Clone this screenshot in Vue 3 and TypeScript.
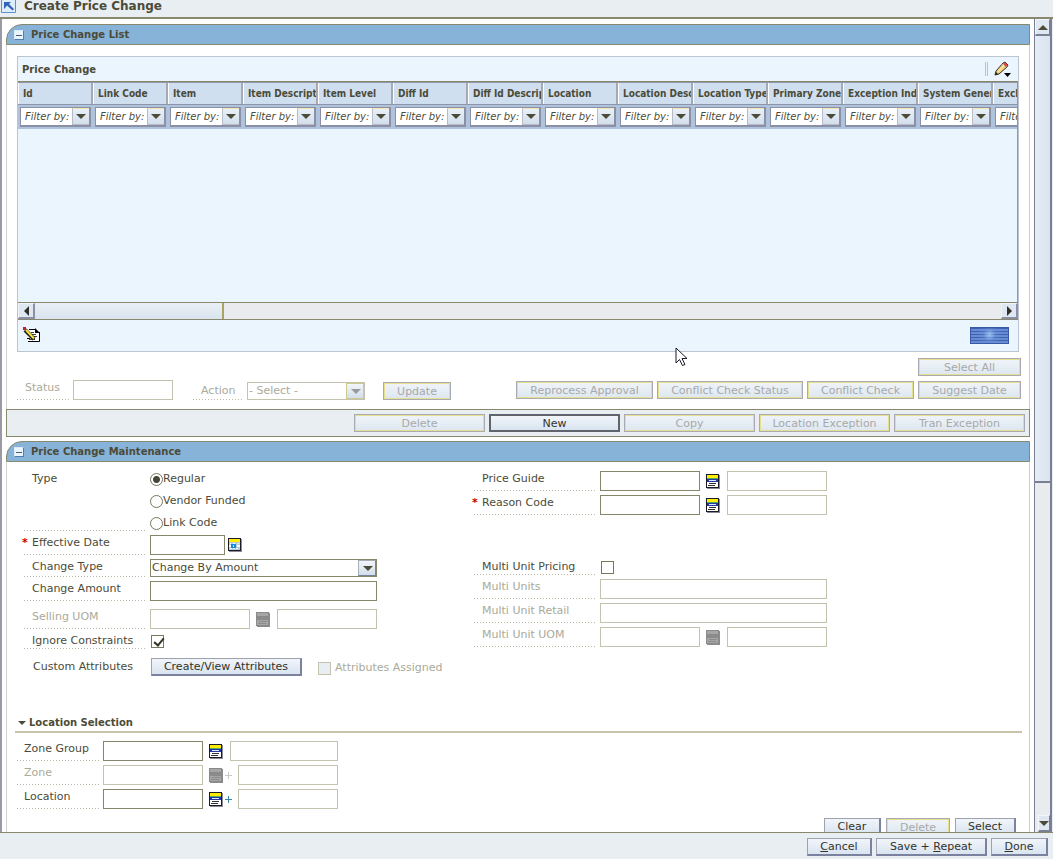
<script setup lang="ts">
import { ref } from 'vue'

const columns: string[] = [
  'Id', 'Link Code', 'Item', 'Item Descript', 'Item Level', 'Diff Id', 'Diff Id Descrip',
  'Location', 'Location Desc', 'Location Type', 'Primary Zone', 'Exception Ind', 'System Gener', 'Excl',
]
const rowActions = ['Delete', 'New', 'Copy', 'Location Exception', 'Tran Exception']
const types = ['Regular', 'Vendor Funded', 'Link Code']
const type = ref('Regular')
const ignoreConstraints = ref(true)
const multiUnit = ref(false)
</script>

<template>
  <div class="window">
    <svg class="defs" width="0" height="0" aria-hidden="true">
      <symbol id="list-icon" viewBox="0 0 14 15">
        <path fill="#8c8c98" d="M1 1h13v14H1z" />
        <path fill="#1c1c28" d="M0 0h13v14H0z" />
        <path fill="#fff" d="M1 1h11v12H1z" />
        <path fill="#ffee00" d="M1 1h11v3H1z" />
        <path fill="#5aa860" d="M1 4h11v1H1z" />
        <path fill="#2038a0" d="M1 5h11v3H1z" />
        <path fill="#dfe6ff" d="M3 6h7v1H3z" />
        <path fill="#333" d="M3 9h7v1H3zM2 11h7v1H2z" />
      </symbol>
      <symbol id="list-icon-off" viewBox="0 0 14 15">
        <path fill="#8a8a8a" d="M0 0h13v14H0z" />
        <path fill="#a6a6a6" d="M1 1h11v3H1zM1 8h11v5H1z" />
        <path fill="#8c8c8c" d="M2 6h9v1H2zM3 9h8v1H3zM2 11h8v1H2zM13 1h1v14H1v-1h12z" />
      </symbol>
    </svg>

    <header class="titlebar">
      <svg class="corner" width="16" height="16" viewBox="0 0 16 16">
        <path d="M.5 0v12.500h14V0" fill="#dcedfb" stroke="#5f8fd0" />
        <path d="M3 2h7L8 4l5 5-1.500 1.500-5.500-5L4 8 3 9z" fill="#3464b8" />
      </svg>
      <h1>Create Price Change</h1>
    </header>

    <div class="body">
      <main class="content">
        <section>
          <div class="section-head">
            <button class="collapse" type="button" aria-label="Collapse Price Change List"></button>
            <h2>Price Change List</h2>
          </div>
          <div class="panel list-panel">
            <div class="grid-box">
              <div class="grid-title">
                <h3>Price Change</h3>
                <span class="grip"></span>
                <button class="icon-button" type="button" aria-label="Edit">
                  <svg width="17" height="17" viewBox="0 0 17 17">
                    <path d="M1 14l1-4 7-8 2-1 3 3-1 2-8 7z" fill="#f3cf78" stroke="#37302a" />
                    <path d="M9 2.500l2-1 2.500 2.500-2 2z" fill="#e2404c" />
                    <path d="M8 3.500l3 3" stroke="#ddd" />
                    <path d="M4 11l6-7" stroke="#fff0b8" />
                    <path d="M1 14l1-3 2 2z" fill="#222" />
                    <path d="M10 12h7l-3.500 4z" fill="#000" />
                  </svg>
                </button>
              </div>
              <div class="grid-scroll">
                <table>
                  <thead>
                    <tr class="names">
                      <th v-for="name in columns" :key="name" scope="col">{{ name }}</th>
                    </tr>
                    <tr class="filters">
                      <td v-for="name in columns" :key="name">
                        <div class="filter">
                          <input type="text" value="Filter by:" :aria-label="'Filter ' + name" />
                          <button type="button" class="drop" :aria-label="'Open filter ' + name"><i class="down"></i></button>
                        </div>
                      </td>
                    </tr>
                  </thead>
                </table>
              </div>
              <div class="hbar">
                <button type="button" class="hstep" aria-label="Scroll left"><i class="left"></i></button>
                <span class="hthumb"></span>
                <button type="button" class="hstep end" aria-label="Scroll right"><i class="right"></i></button>
              </div>
              <div class="grid-foot">
                <button class="icon-button" type="button" aria-label="Edit record">
                  <svg width="18" height="16" viewBox="0 0 18 16">
                    <path d="M6 2h7l4 4v9H5v-3z" fill="#fff" />
                    <path d="M6 2.500h6M16.500 5v9.500H5M4 11.500h3" fill="none" stroke="#000" />
                    <path d="M12 1v5h5z" fill="#000" />
                    <path d="M8 5.500h3M9 7.500h4M11 9.500h3M6 12.500h3" stroke="#444" />
                    <path d="M2 3l9 9" stroke="#222" stroke-width="4" />
                    <path d="M3 3l8 8.500" stroke="#f4e638" stroke-width="2" />
                    <path d="M10 12.500l2 .5v-2z" fill="#000" />
                    <path d="M0 0h3v3H0z" fill="#d01838" />
                  </svg>
                </button>
                <span class="busy"></span>
              </div>
            </div>

            <div class="tools">
              <div class="tools-left">
                <label class="lbl off status" for="status">Status</label>
                <input id="status" class="field w100" type="text" disabled />
                <label class="lbl off action" for="action">Action</label>
                <span class="select off-select">
                  <select id="action" disabled><option>- Select -</option></select>
                  <i class="down"></i>
                </span>
                <button class="btn update" type="button" disabled>Update</button>
              </div>
              <div class="tools-right">
                <button class="btn all" type="button" disabled>Select All</button>
                <button class="btn" type="button" disabled>Reprocess Approval</button>
                <button class="btn" type="button" disabled>Conflict Check Status</button>
                <button class="btn" type="button" disabled>Conflict Check</button>
                <button class="btn" type="button" disabled>Suggest Date</button>
              </div>
            </div>
          </div>
          <div class="actionbar">
            <button v-for="a in rowActions" :key="a" class="btn" :class="{ primary: a === 'New' }" type="button" :disabled="a !== 'New'">{{ a }}</button>
          </div>
        </section>

        <section class="second">
          <div class="section-head">
            <button class="collapse" type="button" aria-label="Collapse Price Change Maintenance"></button>
            <h2>Price Change Maintenance</h2>
          </div>
          <div class="panel maint">
            <div class="columns">
              <div class="col">
                <div class="row type-row">
                  <span id="type-label" class="lbl">Type</span>
                  <div class="radios" role="radiogroup" aria-labelledby="type-label">
                    <label v-for="t in types" :key="t"><input v-model="type" type="radio" name="type" :value="t" />{{ t }}</label>
                  </div>
                </div>
                <div class="row">
                  <label class="lbl required" for="date">Effective Date</label>
                  <input id="date" class="field w75" type="text" />
                  <button class="icon-button date" type="button" aria-label="Pick a date">
                    <svg width="14" height="14" viewBox="0 0 14 14" shape-rendering="crispEdges">
                      <path fill="#8c8c98" d="M1 1h13v13H1z" />
                      <path fill="#1c1c28" d="M0 0h13v13H0z" />
                      <path fill="#b4ccdc" d="M1 1h11v11H1z" />
                      <path fill="#ffee00" d="M1 1h11v3H1z" />
                      <path fill="#f4faff" d="M2 5h1v1H2zM5 5h2v1H5zM10 5h1v1h-1zM1 7h2v2H1zM9 7h3v2H9zM2 10h2v1H2zM5 10h2v1H5zM8 10h2v1H8z" />
                      <path fill="#1888d8" d="M3 6h5v4H3z" />
                      <path fill="#b8ecff" d="M5 7h1v2H5z" />
                    </svg>
                  </button>
                </div>
                <div class="row short">
                  <label class="lbl" for="ctype">Change Type</label>
                  <span class="select w227">
                    <select id="ctype"><option>Change By Amount</option></select>
                    <i class="down"></i>
                  </span>
                </div>
                <div class="row">
                  <label class="lbl" for="amount">Change Amount</label>
                  <input id="amount" class="field w227" type="text" />
                </div>
                <div class="row selling">
                  <label class="lbl off" for="suom">Selling UOM</label>
                  <input id="suom" class="field w100" type="text" disabled />
                  <button class="icon-button lov" type="button" disabled aria-label="Selling UOM list"><svg width="14" height="15" shape-rendering="crispEdges"><use href="#list-icon-off" /></svg></button>
                  <input class="field w100" type="text" disabled aria-label="Selling UOM description" />
                </div>
                <div class="row ignore">
                  <label class="lbl" for="ignore">Ignore Constraints</label>
                  <input id="ignore" v-model="ignoreConstraints" type="checkbox" />
                </div>
                <div class="row custom">
                  <span class="lbl plain">Custom Attributes</span>
                  <button class="btn attributes" type="button">Create/View Attributes</button>
                  <label class="assigned"><input type="checkbox" disabled />Attributes Assigned</label>
                </div>
              </div>

              <div class="col">
                <div class="row">
                  <label class="lbl" for="guide">Price Guide</label>
                  <input id="guide" class="field w100" type="text" />
                  <button class="icon-button lov" type="button" aria-label="Price Guide list"><svg width="14" height="15" shape-rendering="crispEdges"><use href="#list-icon" /></svg></button>
                  <input class="field w100" type="text" disabled aria-label="Price Guide description" />
                </div>
                <div class="row">
                  <label class="lbl required" for="reason">Reason Code</label>
                  <input id="reason" class="field w100" type="text" />
                  <button class="icon-button lov" type="button" aria-label="Reason Code list"><svg width="14" height="15" shape-rendering="crispEdges"><use href="#list-icon" /></svg></button>
                  <input class="field w100" type="text" disabled aria-label="Reason Code description" />
                </div>
                <div class="row multi">
                  <label class="lbl" for="mup">Multi Unit Pricing</label>
                  <input id="mup" v-model="multiUnit" type="checkbox" />
                </div>
                <div class="row">
                  <label class="lbl off" for="mu">Multi Units</label>
                  <input id="mu" class="field w227" type="text" disabled />
                </div>
                <div class="row">
                  <label class="lbl off" for="mur">Multi Unit Retail</label>
                  <input id="mur" class="field w227" type="text" disabled />
                </div>
                <div class="row">
                  <label class="lbl off" for="muu">Multi Unit UOM</label>
                  <input id="muu" class="field w100" type="text" disabled />
                  <button class="icon-button lov" type="button" disabled aria-label="Multi Unit UOM list"><svg width="14" height="15" shape-rendering="crispEdges"><use href="#list-icon-off" /></svg></button>
                  <input class="field w100" type="text" disabled aria-label="Multi Unit UOM description" />
                </div>
              </div>
            </div>

            <div class="location">
              <h3><i class="down"></i>Location Selection</h3>
              <div class="row">
                <label class="lbl" for="zg">Zone Group</label>
                <input id="zg" class="field w100" type="text" />
                <button class="icon-button lov" type="button" aria-label="Zone Group list"><svg width="14" height="15" shape-rendering="crispEdges"><use href="#list-icon" /></svg></button>
                <input class="field w108" type="text" disabled aria-label="Zone Group description" />
              </div>
              <div class="row">
                <label class="lbl off" for="zone">Zone</label>
                <input id="zone" class="field w100" type="text" disabled />
                <button class="icon-button lov plus off" type="button" disabled aria-label="Zone list"><svg width="14" height="15" shape-rendering="crispEdges"><use href="#list-icon-off" /></svg><b></b></button>
                <input class="field w100" type="text" disabled aria-label="Zone description" />
              </div>
              <div class="row">
                <label class="lbl" for="loc">Location</label>
                <input id="loc" class="field w100" type="text" />
                <button class="icon-button lov plus" type="button" aria-label="Location list"><svg width="14" height="15" shape-rendering="crispEdges"><use href="#list-icon" /></svg><b></b></button>
                <input class="field w100" type="text" disabled aria-label="Location description" />
              </div>
              <div class="loc-actions">
                <button class="btn" type="button">Clear</button>
                <button class="btn wide" type="button" disabled>Delete</button>
                <button class="btn mid" type="button">Select</button>
              </div>
            </div>
          </div>
        </section>
      </main>

      <div class="vbar">
        <button type="button" class="vstep" aria-label="Scroll up"><i class="up"></i></button>
        <span class="vthumb"></span>
        <button type="button" class="vstep end" aria-label="Scroll down"><i class="down"></i></button>
      </div>
    </div>

    <footer class="footer">
      <button class="btn cancel" type="button"><u>C</u>ancel</button>
      <button class="btn save" type="button">Save + <u>R</u>epeat</button>
      <button class="btn done" type="button"><u>D</u>one</button>
    </footer>

    <svg class="pointer" width="13" height="20" viewBox="0 0 13 20" aria-hidden="true">
      <path d="M1 1v15l3.500-3.500 3 6 2.500-1-3-6H12z" fill="#fff" stroke="#181828" />
    </svg>
  </div>
</template>

<style>
body { overflow: hidden; }
</style>

<style scoped>
* { box-sizing: border-box; }
.window {
  position: relative;
  display: flex;
  flex-direction: column;
  height: 100vh;
  background: #e9eef2;
  color: #4b4b38;
  font: 11px/14px "DejaVu Sans", Verdana, sans-serif;
}
.defs { position: absolute; }
h1, h2, h3 { margin: 0; font-size: 10px; line-height: 14px; }
input, button, select { margin: 0; padding: 0; font: inherit; color: inherit; border-radius: 0; }
button { cursor: default; }
.titlebar { flex: none; display: flex; gap: 7px; height: 19px; border-bottom: 2px solid #88886c; }
.titlebar .corner { margin-left: 1px; }
.titlebar h1 { font-size: 12px; line-height: 13px; }

.body { flex: 1; min-height: 0; display: flex; background: #fff; border-left: 2px solid #9b99a3; border-right: 1px solid #e9eef2; }
.content { flex: 1; min-width: 0; overflow: hidden; padding: 5px 4px 0; }
.section-head {
  display: flex; align-items: center; gap: 7px; height: 21px; padding-left: 7px;
  background: #87b3d9; border: 1px solid #88886c; border-radius: 16px 0 0 0;
}
.collapse {
  width: 10px; height: 10px; border: 1px solid #dceaf8; border-right-color: #4d7fb5; border-bottom-color: #4d7fb5;
  background: linear-gradient(#4b5b70, #4b5b70) center / 6px 1px no-repeat, #eaf4fd; margin-top: 1px;
}
.panel { border: 1px solid #cfcfcf; border-width: 0 1px; }
.list-panel { padding: 11px 8px 9px 10px; }
.second { margin-top: 4px; }

.grid-box { margin-right: 2px; border: 1px solid #bcc4d4; background: #ebf5fe; }
.grid-title { display: flex; align-items: center; height: 25px; padding: 0 7px 0 4px; border-bottom: 1px solid #88886c; }
.grid-title h3 { flex: 1; padding-top: 1px; }
.grip { width: 3px; height: 14px; margin-right: 6px; border: 1px solid #bcc0c8; border-width: 0 1px; }
.icon-button { flex: none; display: flex; border: 0; background: none; }
.grid-scroll { height: 220px; overflow: hidden; border-right: 1px solid #9297a8; border-top: 1px solid #9297a8; }
table { width: 1050px; table-layout: fixed; border-collapse: separate; border-spacing: 0; }
th {
  height: 21px; padding: 0 0 0 4px; overflow: hidden; white-space: nowrap; text-align: left;
  font: bold 10px/14px "DejaVu Sans Condensed", "DejaVu Sans", Verdana, sans-serif;
  background: #cfdfef; border-left: 1px solid #fff; border-right: 2px solid #a4a9b3;
}
.filters td { height: 24px; padding: 2px; background: #afc3dc; border-top: 1px solid #8c95aa; }
.filter { display: flex; height: 20px; border: 2px solid #8b90a6; border-width: 1px 2px 2px 1px; background: #fff; }
.filter input {
  flex: 1; min-width: 0; padding-left: 4px; border: 0; background: #fff;
  font: italic 10px/14px "DejaVu Sans", Verdana, sans-serif;
}
.drop { width: 17px; display: grid; place-items: center; border: 1px solid #b9bcc8; border-right-width: 0; border-top-color: #f3e6ae; background: linear-gradient(#e8f0f8, #d3dfec); }
i { display: inline-block; width: 0; height: 0; border: 5px solid transparent; }
i.down { border-top-color: #4b4b38; border-bottom: 0; }
i.up { border-bottom-color: #4b4b38; border-top: 0; }
i.left { border-right-color: #303028; border-left: 0; }
i.right { border-left-color: #303028; border-right: 0; }

.hbar { display: flex; height: 18px; background: #e9ebef; border: 1px solid #88886c; border-width: 1px 0; }
.hstep { width: 17px; display: grid; place-items: center; background: #dfe8f2; border: 1px solid #f0f4f8; border-right: 2px solid #8b90a6; border-bottom: 2px solid #8b90a6; }
.hthumb { width: 189px; background: linear-gradient(#e9eff6, #d9e4ee); border-right: 2px solid #aaa362; }
.end { margin-left: auto; }
.grid-foot { display: flex; align-items: center; justify-content: space-between; height: 31px; padding: 0 9px 0 5px; }
.grid-foot .icon-button { padding-bottom: 1px; }
.busy {
  width: 39px; height: 17px; border: 1px solid #3b58a5;
  background: radial-gradient(circle at 50% 45%, #a9d0f6cc, #6f98dc55 30%, transparent 65%), repeating-linear-gradient(#4060b4 0 1px, #668cd2 1px 3px);
}

.tools { display: flex; justify-content: space-between; align-items: flex-end; padding-top: 6px; }
.tools-left { display: flex; align-items: flex-end; }
.tools-right { display: grid; grid-template-columns: 137px 146px 107px 103px; gap: 5px 4px; margin-bottom: 1px; }
.tools-right .all { grid-column: 4; }
.btn {
  height: 18px; padding-top: 1px; white-space: nowrap; text-align: center; line-height: 14px;
  color: #33332a; background: linear-gradient(#f1f5fa, #d9e4f0);
  border: 1px solid #9da1b0; border-right: 2px solid #7b82a0; border-bottom: 2px solid #7b82a0;
}
.btn:disabled {
  color: #a7a9ab; background: linear-gradient(#f0f4f8, #dde7f0);
  border: 1px solid #aaaab4; box-shadow: inset 0 0 0 1px #e6df8e;
}
.btn.primary { border: 2px solid #60646c; }
.tools-left .lbl { width: 52px; margin-right: 4px; }
.tools-left .action { width: 49px; margin: 0 5px 0 20px; height: 17px; }
.update { width: 68px; margin-left: 18px; }
.actionbar { display: flex; justify-content: flex-end; gap: 4px; padding: 4px; height: 28px; border: 1px solid #88886c; background: #e9eef2; }
.actionbar .btn { width: 131px; }

.maint { padding: 9px 7px 0 8px; }
.columns { display: grid; grid-template-columns: 450px 1fr; padding-left: 9px; }
.col { display: flex; flex-direction: column; gap: 4px; }
.row { display: flex; align-items: center; height: 20px; }
.lbl {
  position: relative; flex: none; width: 122px; height: 20px; margin-right: 4px; padding-left: 8px;
  line-height: 16px; white-space: nowrap;
  background: repeating-linear-gradient(90deg, #bdbba8 0 1px, transparent 1px 3px) left bottom / 100% 1px no-repeat;
}
.off { color: #aaaa99; }
.required::before { content: "*"; position: absolute; left: -2px; color: #c00000; font-weight: bold; }
.field { flex: none; height: 20px; padding: 0 3px; background: #fff; border: 1px solid #86866a; }
.field:disabled { border-color: #c3c3b0; }
.w75 { width: 75px; }
.w100 { width: 100px; }
.w108 { width: 108px; }
.w227 { width: 227px; }
.date { margin-left: 3px; }
.lov { width: 27px; height: 20px; padding: 3px 0 0 6px; align-items: flex-start; }
.lov.plus { width: 35px; }
.lov b {
  width: 7px; height: 7px; margin: 4px 0 0 2px;
  background: linear-gradient(#3987a8, #3987a8) center / 7px 1px no-repeat, linear-gradient(#3987a8, #3987a8) center / 1px 7px no-repeat;
}
.lov.off b { opacity: .4; filter: grayscale(1); }
.type-row { height: 60px; }
.type-row .lbl { height: 60px; }
.radios { flex: none; display: flex; flex-direction: column; gap: 4px; }
.radios label { flex: none; display: flex; align-items: center; height: 18px; }
input[type="radio"] { appearance: none; width: 13px; height: 13px; border: 1px solid #77775c; border-radius: 50%; background: #fff; }
input[type="radio"]:checked { background: radial-gradient(#45453a 0 3px, #fff 4px); }
input[type="checkbox"] { appearance: none; flex: none; width: 13px; height: 13px; margin: 1px 0 0 1px; border: 1px solid #77775c; background: #fff; }
input[type="checkbox"]:checked::before {
  content: ""; display: block; width: 4px; height: 8px; margin: 0 0 0 4px;
  border: solid #33332a; border-width: 0 2px 2px 0; transform: rotate(40deg);
}
input[type="checkbox"]:disabled { border-color: #c3c3b0; background: #e9eef2; }
.select { position: relative; flex: none; display: flex; height: 18px; border: 1px solid #86866a; background: #fff; }
.select select { flex: 1; min-width: 0; appearance: none; border: 0; background: transparent; padding-left: 1px; color: inherit; opacity: 1; }
.select::after { content: ""; width: 16px; background: linear-gradient(#f1f5fa, #d3dfec); border: 1px solid #a9adb8; border-right-color: #7b82a0; border-bottom-color: #7b82a0; }
.select i { position: absolute; right: 3px; top: 6px; z-index: 1; }
.off-select { width: 118px; color: #aaaa99; border-color: #c3c3b0; }
.off-select i.down { border-top-color: #999; }
.off-select::after { border-color: #cdc98a; }
.short, .short .lbl { height: 18px; }
.selling { margin-top: 4px; }
.ignore, .ignore .lbl { height: 16px; }
.custom { margin-top: 4px; }
.lbl.plain { background: none; padding-left: 9px; line-height: 20px; margin-right: 5px; }
.attributes { width: 151px; }
.assigned { display: flex; align-items: center; gap: 4px; margin-left: 15px; padding-top: 1px; color: #aaaa99; }
.multi { height: 16px; margin-top: 40px; }
.multi .lbl { height: 16px; }
.location { margin-top: 38px; }
.location h3 { display: flex; align-items: center; gap: 3px; height: 18px; padding-left: 3px; margin-bottom: 8px; border-bottom: 2px solid #c9c3ab; }
.location h3 i { border-width: 4px; border-bottom-width: 0; }
.location .row { margin: 0 0 4px 2px; }
.location .lbl { width: 82px; padding-left: 7px; }
.loc-actions { display: flex; justify-content: flex-end; gap: 5px; margin-top: 9px; padding-right: 6px; }
.loc-actions .btn { width: 57px; }
.loc-actions .wide { width: 64px; }
.loc-actions .mid { width: 61px; }

.vbar { flex: none; display: flex; flex-direction: column; width: 18px; background: #e9ebef; border: 1px solid #7b7f93; border-width: 0 2px 0 1px; }
.vstep { flex: none; height: 17px; display: grid; place-items: center; background: #dfe8f2; border: 1px solid #f3f6fa; border-bottom: 2px solid #7b7f93; border-right-color: #7b7f93; }
.vstep.end { margin-top: auto; }
.vthumb { height: 55%; background: linear-gradient(90deg, #e6edf5, #d8e4ef); border-bottom: 2px solid #7b7f93; }

.footer { flex: none; display: flex; justify-content: flex-end; gap: 4px; height: 27px; padding: 5px 5px 0; border-top: 1px solid #88886c; background: #e9eef2; }
.cancel { width: 65px; }
.save { width: 111px; }
.done { width: 57px; }
.pointer { position: absolute; left: 675px; top: 347px; pointer-events: none; }
</style>
